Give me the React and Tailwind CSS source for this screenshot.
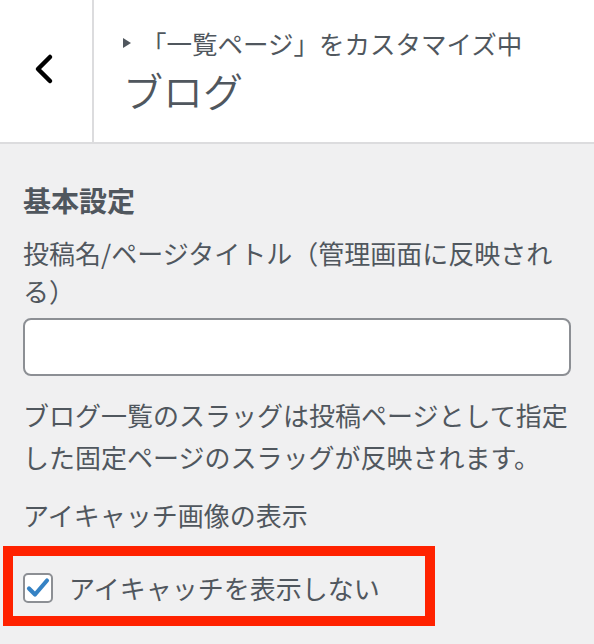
import React from "react";

const font = "font-['Noto_Sans_CJK_JP','Noto_Sans',sans-serif]";

const BackChevron = () => (
  <svg width="22" height="34" viewBox="0 0 22 34" fill="none">
    <polyline points="17,5 5,17 17,29" stroke="#000" strokeWidth="4.5" strokeLinecap="round" strokeLinejoin="round" />
  </svg>
);

const Check = () => (
  <svg width="24" height="22" viewBox="0 0 24 22" fill="none">
    <path d="M3 11.5 L9 17.5 L21 3.5" stroke="#3582c4" strokeWidth="4.2" strokeLinecap="round" strokeLinejoin="round" />
  </svg>
);

export default function App() {
  return (
    <div className={`w-[594px] h-[644px] overflow-hidden bg-[#f0f0f1] text-[#50575e] ${font}`}>
      {/* header */}
      <div className="flex h-[144px] bg-white border-b-2 border-[#dcdcde]">
        <div className="w-[94px] shrink-0 flex items-center justify-center border-r-2 border-[#dcdcde] pr-[4px] pb-[4px]">
          <BackChevron />
        </div>
        <div className="flex flex-col pl-[29px] pt-[26px]">
          <div className="flex items-center text-[25.5px] leading-[34px]">
            <svg width="8" height="10" viewBox="0 0 8 10" className="mr-[10px]">
              <polygon points="0,0 8,5 0,10" fill="#50575e" />
            </svg>
            <span>「一覧ページ」をカスタマイズ中</span>
          </div>
          <div className="text-[40px] leading-[56px] mt-[2px] font-[350]">ブログ</div>
        </div>
      </div>

      {/* body */}
      <div className="px-[23px] pt-[37px]">
        <div className="text-[28px] leading-[38px] font-bold">基本設定</div>
        <div className="mt-[15px] text-[26px] leading-[38px]">投稿名/ページタイトル（管理画面に反映される）</div>
        <div className="mt-[8px] h-[58px] bg-white border-2 border-[#8c8f94] rounded-[8px]" />
        <p className="mt-[18px] text-[26px] leading-[42px]">
          ブログ一覧のスラッグは投稿ページとして指定した固定ページのスラッグが反映されます。
        </p>
        <div className="mt-[18px] text-[26px] leading-[38px]">アイキャッチ画像の表示</div>
        <div className="mt-[12px] -ml-[20px] w-[432px] h-[80px] border-[10px] border-[#ff2200] flex items-center pl-[10px] pt-[4px]">
          <div className="w-[30px] h-[30px] bg-white border-2 border-[#8c8f94] rounded-[5px] flex items-center justify-center">
            <Check />
          </div>
          <span className="ml-[16px] text-[26px] leading-[38px]">アイキャッチを表示しない</span>
        </div>
      </div>
    </div>
  );
}
